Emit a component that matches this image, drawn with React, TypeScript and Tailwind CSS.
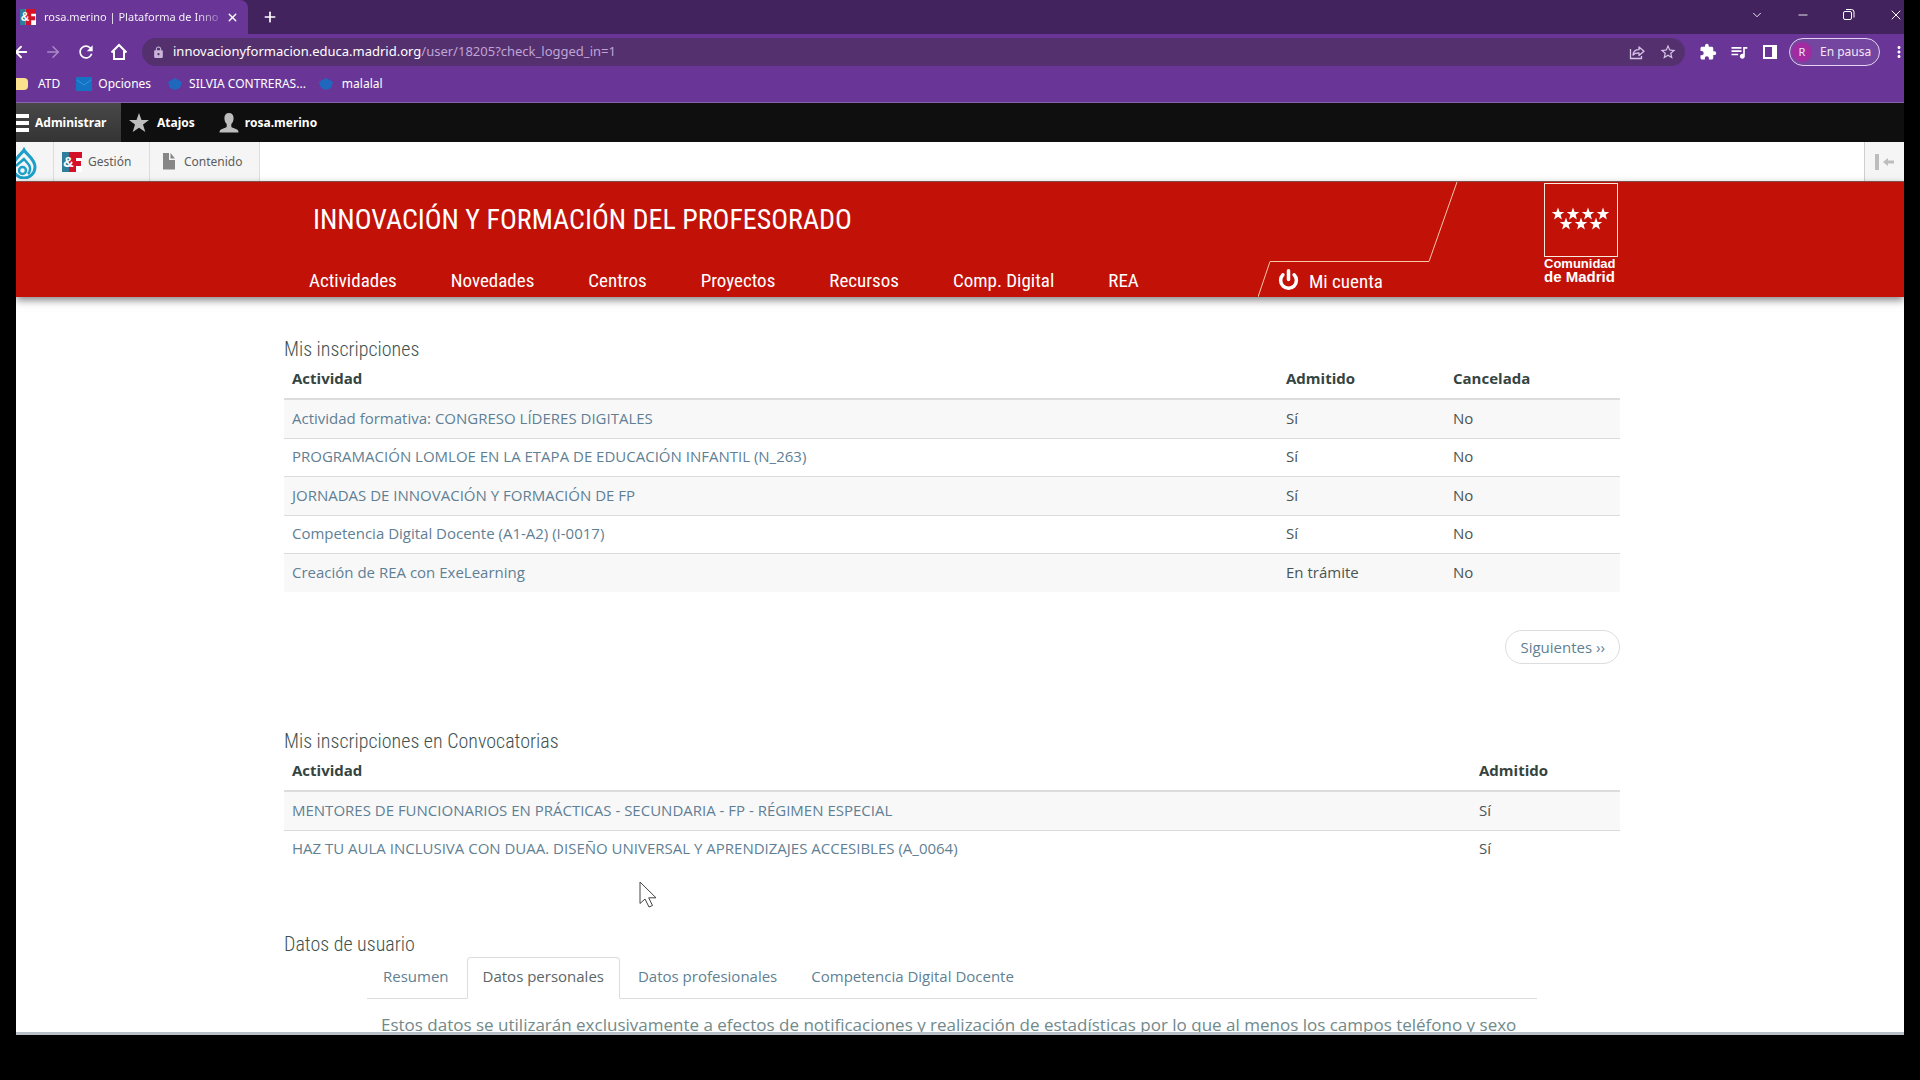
import React from 'react';
import { ArrowLeft, ArrowRight, ChevronDown, Minus, Plus, Power, X } from 'lucide-react';
import { MdExtension, MdLock, MdMoreVert, MdQueueMusic, MdRefresh, MdStarBorder } from 'react-icons/md';

interface Activity {
  name: string;
  cells: string[];
}

const NAV_ITEMS = ['Actividades', 'Novedades', 'Centros', 'Proyectos', 'Recursos', 'Comp. Digital', 'REA'];

const TABS = ['Resumen', 'Datos personales', 'Datos profesionales', 'Competencia Digital Docente'];

const INSCRIPCIONES: Activity[] = [
  { name: 'Actividad formativa: CONGRESO LÍDERES DIGITALES', cells: ['Sí', 'No'] },
  { name: 'PROGRAMACIÓN LOMLOE EN LA ETAPA DE EDUCACIÓN INFANTIL (N_263)', cells: ['Sí', 'No'] },
  { name: 'JORNADAS DE INNOVACIÓN Y FORMACIÓN DE FP', cells: ['Sí', 'No'] },
  { name: 'Competencia Digital Docente (A1-A2) (I-0017)', cells: ['Sí', 'No'] },
  { name: 'Creación de REA con ExeLearning', cells: ['En trámite', 'No'] },
];

const CONVOCATORIAS: Activity[] = [
  { name: 'MENTORES DE FUNCIONARIOS EN PRÁCTICAS - SECUNDARIA - FP - RÉGIMEN ESPECIAL', cells: ['Sí'] },
  { name: 'HAZ TU AULA INCLUSIVA CON DUAA. DISEÑO UNIVERSAL Y APRENDIZAJES ACCESIBLES (A_0064)', cells: ['Sí'] },
];

const STARS = [
  [14, 31],
  [29, 31],
  [44, 31],
  [59, 31],
  [22, 41],
  [37, 41],
  [52, 41],
];

const SiteIcon: React.FC<{ className: string }> = ({ className }) => (
  <svg viewBox="0 0 20 20" className={className} aria-hidden="true">
    <rect width="20" height="20" fill="#fff" />
    <rect width="7" height="20" fill="#2f7d9c" />
    <path d="M7 0h13v6h-6v3h5v5h-5v6H7z" fill="#d3122a" />
    <text x="1" y="15" fontSize="15" fontWeight="700" fontFamily="Liberation Sans, sans-serif" fill="#fff">
      &amp;
    </text>
  </svg>
);

const TabStrip: React.FC = () => (
  <div className="flex h-[34px] items-stretch bg-[#43235e] text-white">
    <div className="flex w-[232px] items-center rounded-tr-lg bg-[#693698] pl-1">
      <SiteIcon className="h-4 w-4 flex-none" />
      <span className="ml-2 w-[178px] bg-linear-to-r from-white from-85% to-white/20 bg-clip-text text-[11px] whitespace-nowrap text-transparent">
        rosa.merino | Plataforma de Inno
      </span>
      <button aria-label="Cerrar pestaña" className="ml-1">
        <X size={13} strokeWidth={2.5} />
      </button>
    </div>
    <button aria-label="Nueva pestaña" className="ml-3.5">
      <Plus size={16} strokeWidth={2.5} />
    </button>
    <div className="ml-auto flex items-center gap-8 pb-1">
      <button aria-label="Buscar pestañas"><ChevronDown size={14} strokeWidth={1.5} /></button>
      <button aria-label="Minimizar"><Minus size={14} strokeWidth={1.5} /></button>
      <button aria-label="Restaurar">
        <svg viewBox="0 0 14 14" className="h-3.5 w-3.5" fill="none" stroke="currentColor">
          <rect x="1.5" y="3.5" width="8" height="8" rx="1.5" />
          <path d="M4 1.5h5.5a2.5 2.5 0 0 1 2.5 2.5v5.5" />
        </svg>
      </button>
      <button aria-label="Cerrar"><X size={16} strokeWidth={1.5} /></button>
    </div>
  </div>
);

const AddressBar: React.FC = () => (
  <div className="flex h-9 items-center bg-[#693698] text-white">
    <div className="flex w-[126px] items-center gap-3.5">
      <button aria-label="Atrás" className="-ml-1"><ArrowLeft size={18} strokeWidth={2.5} /></button>
      <button aria-label="Adelante" className="text-[#a98cc6]"><ArrowRight size={18} strokeWidth={2} /></button>
      <button aria-label="Recargar"><MdRefresh size={20} /></button>
      <button aria-label="Inicio">
        <svg viewBox="0 0 18 18" className="h-[18px] w-[18px]" fill="none" stroke="currentColor" strokeWidth="2">
          <path d="M1.500 9.500L9 2l7.500 7.500M4 8v8h10V8" />
        </svg>
      </button>
    </div>
    <div className="flex h-7 flex-1 items-center rounded-full bg-[#55306f] pl-2.5 pr-2">
      <MdLock size={13} className="text-[#c9b5da]" />
      <span className="ml-2 text-[13px]">
        innovacionyformacion.educa.madrid.org<span className="text-[#bfa5d6]">/user/18205?check_logged_in=1</span>
      </span>
      <div className="ml-auto flex items-center gap-3.5 text-[#d6c4e6]">
        <button aria-label="Compartir">
          <svg viewBox="0 0 16 16" className="h-4 w-4" fill="none" stroke="currentColor" strokeWidth="1.3">
            <path d="M1.500 5v9.500h11V12" />
            <path d="M4 11c.3-3.500 2.500-5.300 6-5.300V3l5 4.300-5 4.200V8.800C7.500 8.700 5.500 9.300 4 11z" strokeLinejoin="round" />
          </svg>
        </button>
        <button aria-label="Marcar"><MdStarBorder size={18} /></button>
      </div>
    </div>
    <div className="flex items-center pl-3.5">
      <button aria-label="Extensiones"><MdExtension size={18} /></button>
      <button aria-label="Multimedia" className="ml-3"><MdQueueMusic size={20} /></button>
      <button aria-label="Panel lateral" className="ml-3.5">
        <svg viewBox="0 0 14 14" className="h-3.5 w-3.5">
          <path fillRule="evenodd" d="M0 0h14v14H0zM2 2v10h7V2z" fill="currentColor" />
        </svg>
      </button>
      <button className="ml-3 flex h-7 w-[91px] items-center rounded-full border border-[#e3d3f1] bg-[#75469f] pl-0.5 text-xs text-[#f0e6f8]">
        <span className="flex h-5 w-5 items-center justify-center rounded-full bg-[#a32aa0] text-[11px]">R</span>
        <span className="ml-2">En pausa</span>
      </button>
      <button aria-label="Menú" className="-mr-1 ml-2.5"><MdMoreVert size={18} /></button>
    </div>
  </div>
);

const Cap: React.FC<{ className: string }> = ({ className }) => (
  <svg viewBox="0 0 16 14" className={`h-3.5 w-4 ${className}`} aria-hidden="true">
    <path d="M8 1l7 4-2 6-5 2-5-2-2-6z" fill="#1f68bd" />
  </svg>
);

const Bookmarks: React.FC = () => (
  <div className="flex h-[33px] items-center border-b border-[#8a63ab] bg-[#693698] pb-1 text-xs text-white">
    <span className="h-3 w-3 rounded-r-sm bg-[#fbe08e]" />
    <a href="#atd" className="ml-2.5">ATD</a>
    <svg viewBox="0 0 16 14" className="ml-4 h-3.5 w-4" aria-hidden="true">
      <rect width="16" height="14" rx="1" fill="#1673c4" />
      <path d="M1 3l7 5 7-5" stroke="#2f93e0" fill="none" />
    </svg>
    <a href="#opciones" className="ml-1.5">Opciones</a>
    <Cap className="ml-4" />
    <a href="#silvia" className="ml-1.5">SILVIA CONTRERAS...</a>
    <Cap className="ml-3" />
    <a href="#malalal" className="ml-2">malalal</a>
  </div>
);

const AdminBar: React.FC = () => (
  <div className="flex h-[39px] items-stretch bg-[#0f0f0f] text-xs font-bold text-white">
    <button className="flex w-[105px] items-center bg-linear-to-b from-[#484848] to-[#343434]">
      <svg viewBox="0 0 13 18" className="h-[18px] w-[13px]" aria-hidden="true">
        <path d="M0 0h13v4H0zM0 7h13v4H0zM0 14h13v4H0z" fill="#fff" />
      </svg>
      <span className="ml-1.5 font-bold">Administrar</span>
    </button>
    <button className="ml-2 flex items-center">
      <svg viewBox="0 0 20 20" className="h-5 w-5" aria-hidden="true">
        <path d="M10 0l2.500 7H20l-6 4.500 2.300 7.500L10 14.700 3.700 19 6 11.500 0 7h7.500z" fill="#bdbdbd" />
      </svg>
      <span className="ml-2 font-bold">Atajos</span>
    </button>
    <button className="ml-6 flex items-center">
      <svg viewBox="0 0 20 20" className="h-5 w-5" aria-hidden="true">
        <path d="M10 0c3 0 4.600 2 4.600 5.200 0 2.600-1 4.500-2.300 5.800v2.600c0 1.200 2.200 1.600 4.500 2.400 2 .7 2.700 1.700 2.700 3.500H.5c0-1.800.7-2.800 2.700-3.500 2.300-.8 4.500-1.200 4.500-2.400V11C6.400 9.700 5.400 7.800 5.400 5.200 5.400 2 7 0 10 0z" fill="#bdbdbd" />
      </svg>
      <span className="ml-1.5 font-bold">rosa.merino</span>
    </button>
  </div>
);

const AdminTray: React.FC = () => (
  <div className="flex h-10 items-stretch border-b border-[#8c5a55] bg-white text-xs text-[#5c5c5c]">
    <a href="#inicio" aria-label="Drupal" className="flex w-[38px] items-end overflow-hidden border-r border-[#dddddd] bg-[#f5f5f5]">
      <svg viewBox="0 0 26 32" className="-ml-[5px] mb-0.5 h-8 w-[26px]" fill="none" stroke="#1c9fc9" strokeWidth="3" aria-hidden="true">
        <path d="M13 3c2 4 11 9 11 17a10.500 10.500 0 0 1-22 0C2 12 11 7 13 3z" />
        <path d="M5 19c3-3 6-5 8-7l5 6c2 3 1 7-1 9" strokeWidth="2.500" />
        <circle cx="11.500" cy="23.500" r="3.500" strokeWidth="2.500" />
      </svg>
    </a>
    <a href="#gestion" className="flex w-24 items-center border-r border-[#dddddd] bg-[#f5f5f5] pl-2">
      <SiteIcon className="h-5 w-5" />
      <span className="ml-1.5">Gestión</span>
    </a>
    <a href="#contenido" className="flex w-[110px] items-center border-r border-[#dddddd] bg-[#f5f5f5] pl-3">
      <svg viewBox="0 0 14 17" className="h-[17px] w-3.5" aria-hidden="true">
        <path d="M1 0h6v7h6v9.500H1z" fill="#868686" />
        <path d="M8.500 0L13 5.500H8.500z" fill="#868686" />
      </svg>
      <span className="ml-2">Contenido</span>
    </a>
    <button aria-label="Orientación vertical" className="ml-auto flex w-10 items-center justify-center gap-1 border-l border-[#cfcfcf] bg-[#f5f5f5]">
      <span className="h-4 w-1 bg-[#bdbdbd]" />
      <svg viewBox="0 0 11 8" className="h-2 w-[11px]" aria-hidden="true">
        <path d="M0 4l5-4v2.500h6v3H5V8z" fill="#bdbdbd" />
      </svg>
    </button>
  </div>
);

const SiteHeader: React.FC = () => (
  <header className="relative z-10 bg-[#c21107] pr-4 font-['Roboto_Condensed','Roboto',sans-serif] text-white shadow-[0_3px_8px_rgba(0,0,0,0.5)]">
    <div className="mx-auto flex h-[115px] max-w-[1336px]">
      <div className="flex-1">
        <h1 className="mt-[18px] pl-[29px] text-[28px] leading-10">INNOVACIÓN Y FORMACIÓN DEL PROFESORADO</h1>
        <nav className="mt-[27px] flex gap-[54px] pl-[25px] text-[19px] leading-7">
          {NAV_ITEMS.map((item) => (
            <a key={item} href="#nav" className="whitespace-nowrap">
              {item}
            </a>
          ))}
        </nav>
      </div>
      <div className="relative w-[200px] flex-none">
        <svg viewBox="0 0 200 115" className="absolute inset-0 h-full w-full" fill="none" stroke="#f6c9a8" aria-hidden="true">
          <path d="M199 0L171 79.500H12L0 115" />
        </svg>
        <a href="#cuenta" className="relative mt-[86px] flex items-center gap-2.5 pl-5 text-[19px] leading-7">
          <Power size={21} strokeWidth={4} className="mb-1.5" />
          Mi cuenta
        </a>
      </div>
      <div className="ml-[86px] w-[76px] flex-none pt-px font-['Liberation_Sans',sans-serif] leading-[13px] font-bold whitespace-nowrap">
        <svg viewBox="0 0 74 74" className="h-[74px] w-[74px]" aria-hidden="true">
          <rect x="0.5" y="0.5" width="73" height="73" fill="none" stroke="#fbe9df" />
          {STARS.map(([x, y]) => (
            <path
              key={`${x}-${y}`}
              transform={`translate(${x} ${y})`}
              d="M0-6.500L1.600-2H6.300L2.600.8 3.900 5.500 0 2.700-3.900 5.500-2.600.8-6.300-2H-1.600z"
              fill="#fff"
            />
          ))}
        </svg>
        <div className="text-[13px] leading-[13px]">Comunidad</div>
        <div className="text-[15px] leading-[13px]">de Madrid</div>
      </div>
    </div>
  </header>
);

const Heading: React.FC<{ children: React.ReactNode }> = ({ children }) => (
  <h2 className="font-['Roboto_Condensed','Roboto',sans-serif] text-xl leading-[26px] font-light text-[#40524f]">
    {children}
  </h2>
);

interface TableProps {
  columns: { label: string; width: string }[];
  rows: Activity[];
}

const ActivityTable: React.FC<TableProps> = ({ columns, rows }) => (
  <table className="w-full table-fixed text-left text-[15px] leading-6 text-[#495553]">
    <thead>
      <tr className="h-[37px] border-b-2 border-[#dcdcde] align-top text-[#35443f]">
        <th className="pt-1 pl-2">Actividad</th>
        {columns.map((col) => (
          <th key={col.label} className={`pt-1 pl-2 ${col.width}`}>{col.label}</th>
        ))}
      </tr>
    </thead>
    <tbody>
      {rows.map((row) => (
        <tr key={row.name} className="h-[38px] border-t border-[#dcdcde] odd:h-[39px] odd:bg-[#f8f8f9]">
          <td className="pb-0.5 pl-2">
            <a href="#actividad" className="text-[#5f7f94]">{row.name}</a>
          </td>
          {row.cells.map((cell, i) => (
            <td key={i} className="pb-0.5 pl-2">{cell}</td>
          ))}
        </tr>
      ))}
    </tbody>
  </table>
);

const UserTabs: React.FC = () => (
  <section className="mx-[83px]">
    <div className="flex gap-0.5 border-b border-[#dddddf] text-[15px] leading-6" role="tablist">
      {TABS.map((tab) => (
        <button
          key={tab}
          role="tab"
          aria-selected={tab === 'Datos personales'}
          className="-mb-px rounded-t-sm border border-transparent px-[15px] pt-1.5 pb-2.5 whitespace-nowrap text-[#5f7f94] aria-selected:border-[#dddddf] aria-selected:border-b-white aria-selected:bg-white aria-selected:text-[#5b6666]"
        >
          {tab}
        </button>
      ))}
    </div>
    <p className="mt-3 pl-3.5 text-[17px] leading-7 whitespace-nowrap text-[#71898a]">
      Estos datos se utilizarán exclusivamente a efectos de notificaciones y realización de estadísticas por lo que al menos los campos teléfono y sexo
    </p>
  </section>
);

export default function App() {
  return (
    <div className="h-screen bg-black px-4 pb-[45px] font-['Open_Sans',sans-serif]">
      <div className="relative flex h-full flex-col overflow-hidden border-b-3 border-[#b9bfc7] bg-white">
        <div className="flex-none font-['Noto_Sans',sans-serif]">
          <TabStrip />
          <AddressBar />
          <Bookmarks />
          <AdminBar />
          <AdminTray />
        </div>
        <SiteHeader />
        <main className="min-h-0 flex-1 overflow-hidden pr-4">
          <div className="mx-auto max-w-[1336px] pt-[39px]">
            <Heading>Mis inscripciones</Heading>
            <ActivityTable
              columns={[
                { label: 'Admitido', width: 'w-[167px]' },
                { label: 'Cancelada', width: 'w-[175px]' },
              ]}
              rows={INSCRIPCIONES}
            />
            <div className="mt-[38px] mb-16 flex justify-end">
              <a href="#siguientes" className="rounded-full border border-[#dddddf] px-3.5 py-1 text-[15px] leading-6 text-[#5f7f94]">
                Siguientes ››
              </a>
            </div>
            <Heading>Mis inscripciones en Convocatorias</Heading>
            <ActivityTable columns={[{ label: 'Admitido', width: 'w-[149px]' }]} rows={CONVOCATORIAS} />
            <div className="mt-[63px]">
              <Heading>Datos de usuario</Heading>
            </div>
            <UserTabs />
          </div>
        </main>
        {/* mouse pointer */}
        <svg viewBox="0 0 18 27" className="absolute top-[881px] left-[623px] z-20 h-[27px] w-[18px]" aria-hidden="true">
          <path d="M1 1v21.500l5-4.500 4 8 3.500-1.500-3.800-7.700H17z" fill="#fff" stroke="#444" />
        </svg>
      </div>
    </div>
  );
}
